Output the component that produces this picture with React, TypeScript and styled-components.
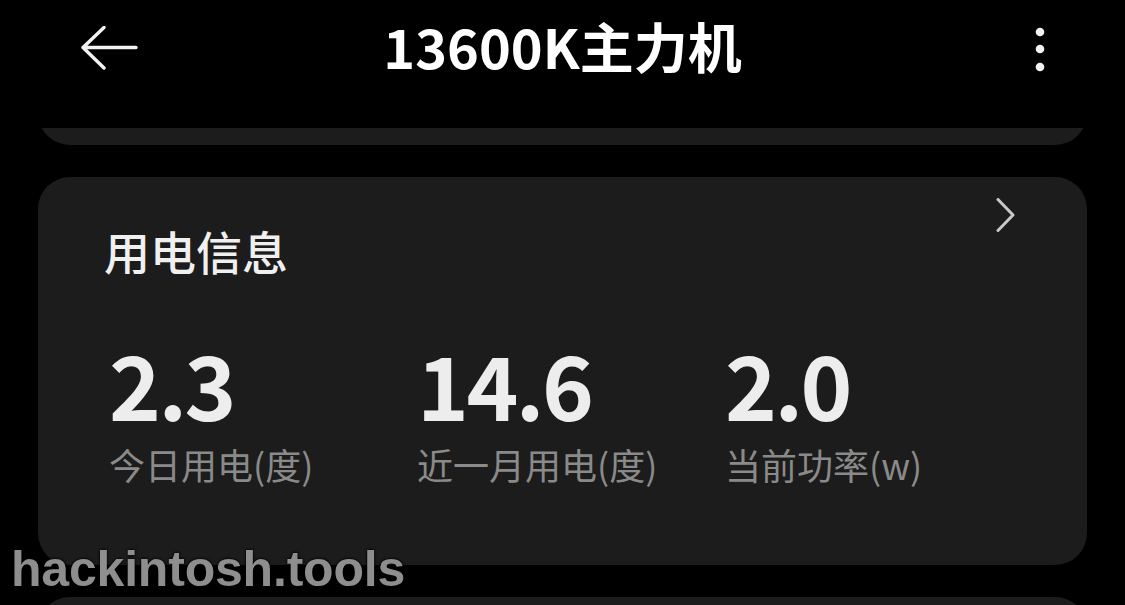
import React from "react";
import styled, { createGlobalStyle } from "styled-components";

const Global = createGlobalStyle`
  html, body { margin: 0; padding: 0; background: #000; }
  body { width: 1125px; height: 605px; overflow: hidden; font-family: "Noto Sans CJK SC", "Noto Sans", sans-serif; }
`;

const Screen = styled.div`
  position: relative;
  width: 1125px;
  height: 605px;
  background: #000;
  overflow: hidden;
  display: flex;
  flex-direction: column;
`;

const Header = styled.header`
  height: 128px;
  flex: none;
  display: grid;
  grid-template-columns: 140px 1fr 140px;
  align-items: start;
  padding-top: 24px;
  box-sizing: border-box;
  background: #000;
  position: relative;
  z-index: 1;
`;

const IconButton = styled.button<{ $align: "start" | "end" }>`
  background: none;
  border: 0;
  padding: 0;
  margin: 0;
  color: #f2f2f2;
  display: flex;
  justify-self: ${(p) => p.$align};
  cursor: pointer;
`;

const BackBtn = styled(IconButton)`
  margin-left: 80px;
  margin-top: 2px;
`;

const MoreBtn = styled(IconButton)`
  margin-right: 80px;
  margin-top: 3px;
`;

const Title = styled.h1`
  margin: 0;
  text-align: center;
  color: #fff;
  font-size: 54px;
  font-weight: 600;
  line-height: 44px;
  letter-spacing: 0;
`;

const Scroll = styled.div`
  flex: 1;
  overflow: hidden;
  padding: 0 38px;
`;

const List = styled.div`
  display: flex;
  flex-direction: column;
  gap: 32px;
  margin-top: -103px;
`;

const Card = styled.section<{ $h: number }>`
  background: #1c1c1c;
  border-radius: 32px;
  height: ${(p) => p.$h}px;
  flex: none;
  box-sizing: border-box;
`;

const InfoCard = styled(Card)`
  padding: 21px 70px 0 66px;
  display: flex;
  flex-direction: column;
`;

const CardTop = styled.div`
  display: flex;
  justify-content: space-between;
  align-items: flex-start;
`;

const CardTitle = styled.h2`
  margin: 29px 0 0;
  color: #f0f0f0;
  font-size: 46px;
  font-weight: 500;
  line-height: 1;
`;

const Chevron = styled.span`
  display: flex;
  color: #c8c8c8;
`;

const Stats = styled.div`
  display: grid;
  grid-template-columns: 308px 308px 1fr;
  margin: 66px 0 0 5px;
`;

const Stat = styled.div`
  display: flex;
  flex-direction: column;
`;

const Value = styled.div`
  color: #ededed;
  font-size: 88px;
  font-weight: 600;
  line-height: 88px;
  letter-spacing: -2.5px;
`;

const Label = styled.div`
  color: #8a8a8a;
  font-size: 36px;
  font-weight: 400;
  line-height: 44px;
  margin-top: 15px;
`;

const Watermark = styled.div`
  position: absolute;
  left: 11px;
  top: 541px;
  font-family: "Liberation Sans", Arial, sans-serif;
  font-weight: 700;
  font-size: 50px;
  line-height: 56px;
  letter-spacing: -0.2px;
  color: #8e8e8e;
  text-shadow: 0 0 3px #000, 0 0 2px #000;
  z-index: 2;
`;

const stats = [
  { v: "2.3", l: "今日用电(度)" },
  { v: "14.6", l: "近一月用电(度)" },
  { v: "2.0", l: "当前功率(w)" },
];

export default function App() {
  return (
    <Screen>
      <Global />
      <Header>
        <BackBtn $align="start" aria-label="返回">
          <svg width="58" height="48" viewBox="0 0 58 48" fill="none">
            <path
              d="M56 21.5H4M24 1.5L3 21.5L24 42"
              stroke="currentColor"
              strokeWidth="3.4"
              strokeLinecap="round"
              strokeLinejoin="round"
            />
          </svg>
        </BackBtn>
        <Title>13600K主力机</Title>
        <MoreBtn $align="end" aria-label="更多">
          <svg width="10" height="46" viewBox="0 0 10 46" fill="currentColor">
            <circle cx="5" cy="5" r="4.3" />
            <circle cx="5" cy="22" r="4.3" />
            <circle cx="5" cy="40" r="4.3" />
          </svg>
        </MoreBtn>
      </Header>
      <Scroll>
        <List>
          <Card $h={120} />
          <InfoCard $h={388}>
            <CardTop>
              <CardTitle>用电信息</CardTitle>
              <Chevron>
                <svg width="22" height="34" viewBox="0 0 22 34" fill="none">
                  <path
                    d="M3 1.5L18 17L3 32.5"
                    stroke="currentColor"
                    strokeWidth="3"
                    strokeLinecap="round"
                    strokeLinejoin="round"
                  />
                </svg>
              </Chevron>
            </CardTop>
            <Stats>
              {stats.map((s) => (
                <Stat key={s.l}>
                  <Value>{s.v}</Value>
                  <Label>{s.l}</Label>
                </Stat>
              ))}
            </Stats>
          </InfoCard>
          <Card $h={200} />
        </List>
      </Scroll>
      <Watermark>hackintosh.tools</Watermark>
    </Screen>
  );
}
